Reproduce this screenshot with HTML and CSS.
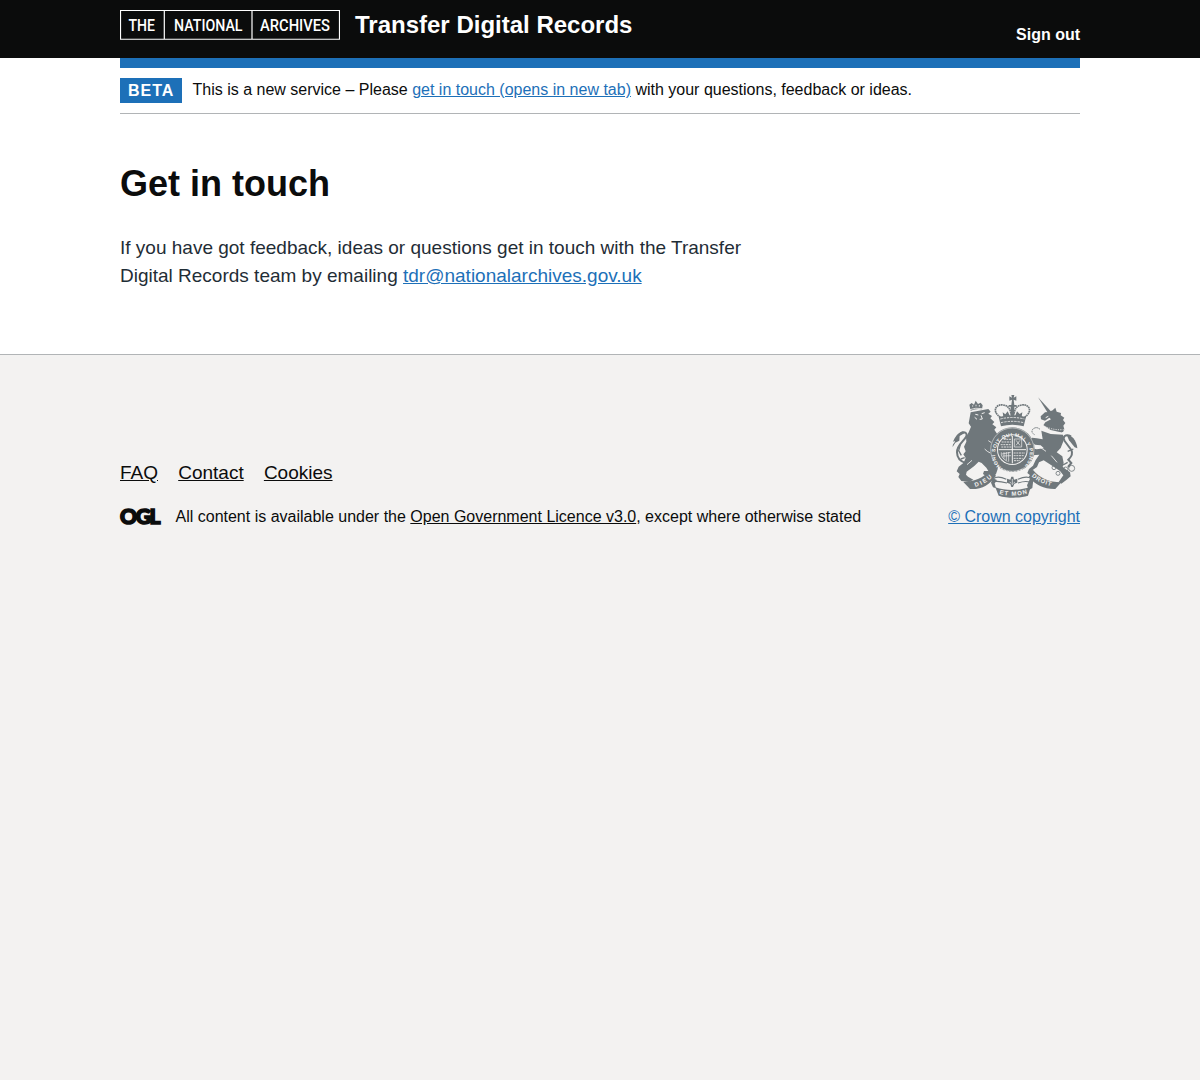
FILE: index.html
```html
<!DOCTYPE html>
<html lang="en">
<head>
<meta charset="utf-8">
<title>Get in touch</title>
<link rel="stylesheet" href="styles.css">
</head>
<body>
<header class="header">
  <div class="container header-row">
    <a class="brand" href="#">
      <svg class="brand-logo" width="220" height="30" viewBox="0 0 220 30" role="img" aria-label="The National Archives">
        <path d="M.5.5h219v28.75H.5zM44.3.5v28.8M132 .5v28.8" fill="none" stroke="#fff" stroke-width="1.2"/>
        <g class="brand-words">
          <text x="8.5" y="21" textLength="26.5" lengthAdjust="spacingAndGlyphs">THE</text>
          <text x="54" y="21" textLength="68.5" lengthAdjust="spacingAndGlyphs">NATIONAL</text>
          <text x="140" y="21" textLength="70" lengthAdjust="spacingAndGlyphs">ARCHIVES</text>
        </g>
      </svg>
      <span class="service-name">Transfer Digital Records</span>
    </a>
    <a class="sign-out" href="#">Sign out</a>
  </div>
</header>
<div class="container">
  <div class="blue-bar"></div>
  <div class="phase-banner">
    <strong class="tag">BETA</strong>
    <span>This is a new service – Please <a class="link" href="#">get in touch (opens in new tab)</a> with your questions, feedback or ideas.</span>
  </div>
  <main class="main">
    <h1 class="heading">Get in touch</h1>
    <p class="body-text">If you have got feedback, ideas or questions get in touch with the Transfer Digital Records team by emailing <a class="link" href="#">tdr@nationalarchives.gov.uk</a></p>
  </main>
</div>
<footer class="footer">
  <div class="container footer-row">
    <div class="footer-main">
      <nav class="footer-nav"><a href="#">FAQ</a><a href="#">Contact</a><a href="#">Cookies</a></nav>
      <div class="licence">
        <svg class="ogl" width="41" height="18" viewBox="0 0 41 18" role="img" aria-label="Open Government Licence">
          <text x="0" y="16.5" textLength="40.5">OGL</text>
        </svg>
        <span>All content is available under the <a href="#">Open Government Licence v3.0</a>, except where otherwise stated</span>
      </div>
    </div>
    <div class="copyright">
      <svg class="crest" width="130" height="104" viewBox="30 30 390 312" aria-hidden="true">
        <defs>
          <path id="motto-ring" d="M183 246A52 52 0 1 1 251 246"/>
          <path id="motto-left" d="M106 306Q136 298 163 271"/>
          <path id="motto-mid" d="M178 327Q220 338 264 325"/>
          <path id="motto-right" d="M275 274Q298 295 338 304"/>
        </defs>
        <!-- lion -->
        <g class="fill">
          <path d="M92 82l53-10 7 8-7 6 11 7-5 7 12 11-6 7 12 9-6 7 10 15-5 13 8 16-7 12 6 11-14 8 8 18 5 22-6 18-9 9-18-1-12-8 3-9 13 0-6-10-14-14-9-4-14 14-22 16-2 9 6 6 16 9-12 7-24-3-9-12 4-9-9-8 6-14 15-12 6-14-7-11 7-9-5-14 7-15-1-14 8-14 7-17-7-10z"/>
          <path d="M92 77l-4-18 7-5 7 5 5-12 7 10 8-4 6 8-2 12q-18-3-34 4z"/>
          <path d="M38 186c0-12 6-10 7-18l-6 2c7-14 12-24 28-31l12 2-20 12-1 14-12 6z"/>
        </g>
        <path class="line" stroke-width="6" d="M58 148c12-10 27-6 20 8C72 168 50 181 51 202c0 18 10 28 28 33"/>
        <path class="line" stroke-width="4" d="M62 176l-6 21 8 14m-2 11l12-4"/>
        <!-- unicorn -->
        <g class="fill">
          <path d="M294 37l40 43-9 6z"/>
          <path d="M326 81l12-5 8-8 4 12 13 4-1 7 11 7-4 7 7 9-6 8 3 11-5 10-36-8-22-14 6-9 17-9-5-5-13 9-12-4-1-9 13-12z"/>
          <path d="M304 137l28 10 37 2 1 20-8 20-12 13 17 12 4 20-3 12 22 16 2 12-13 11-15 11-8-5 14-20-10-13-27-18-22-14-14 6-6 14-13 9 8 13-10 7-14-11 5-12 12-10 8-17 11-16-20 2-11-11 9-10 14 3 22-3-10-9-17-2-14-13 5-8 14 2 18 3z"/>
          <path d="M412 190l-8-3-17-21-7-17c13 0 30 15 32 41z"/>
        </g>
        <path class="line" stroke-width="6" d="M393 154c-17-9-27 2-19 14l20 27c7 15-3 23-9 29l9 10-10 12"/>
        <path class="line" stroke-width="4" d="M383 199l17-7m-17 40l-14 8"/>
        <g class="line" stroke-width="2.500"><circle cx="342" cy="248" r="6"/><circle cx="354" cy="265" r="6"/><circle cx="377" cy="253" r="7"/><circle cx="395" cy="250" r="9"/><circle cx="348" cy="218" r="4"/></g>
        <path class="line" stroke-width="3" stroke-dasharray="5 2" d="M300 133q-11-10-22 0-6 10 6 16"/>
        <g class="paper-line">
          <path stroke-width="3" d="M106 88l9 2m10-4l9-3m-11 8l4 11-8 1m-15-6l7 6M317 98l8-4"/>
          <path stroke-width="2.500" d="M89 74q18-7 38-3M98 61v4m10-6v5m10-4v5M134 192q16 17 34 13M81 239l15-13M145 167q13 6 19 17M318 199l-20-14M334 212l17 20"/>
          <path stroke-width="3.500" stroke-dasharray="4 2.500" d="M303 127q26 18 67 16"/>
          <path stroke-width="3" stroke-dasharray="3 4" d="M308 120q24 16 63 14"/>
        </g>
        <!-- garter and quartered shield -->
        <circle class="fill" cx="217" cy="194" r="67"/>
        <circle class="paper-line" cx="217" cy="194" r="65" stroke-width="1.500"/>
        <circle class="paper" cx="217" cy="194" r="46"/>
        <circle class="fill" cx="217" cy="194" r="43"/>
        <text class="motto ring-text"><textPath href="#motto-ring" textLength="248">HONI SOIT QUI MAL Y PENSE</textPath></text>
        <g class="paper-line">
          <path stroke-width="3" d="M217 153v82M176 194h82"/>
          <path stroke-width="2.500" stroke-dasharray="6 2" d="M185 171h29m-32 8h31m-29 7h30m-23-23h24M221 204h34m-34 8h32m-32 8h27m-26 7h18"/>
          <path stroke-width="2" d="M223 162h22v24h-22zM228 181l12-15m-12 0l12 15M184 202q-3 16 18 27m-10-28v20m7-20v25m7-25v29m-20-23l26-5m-24 11l25-1"/>
          <path stroke-width="3" stroke-dasharray="5 5" d="M184 250q33 22 66 0"/>
        </g>
        <!-- crown -->
        <g class="fill">
          <path d="M176 96q41-10 82 0l-7 28q-34-9-68 0z"/>
          <path d="M214 30h9l-2 8 8-4v13l-8-3 2 16h-9l2-16-8 3V34l8 4zM206 60h24v5h-24zM212 65h11v30h-11zM188 82l8 6 7-9 7 15-20 2zM225 94l6-15 8 8 8-5-2 14z"/>
        </g>
        <path class="line" stroke-width="5" stroke-dasharray="5 1.500" d="M181 97C152 76 171 56 190 60q21 3 23 29M254 97C282 76 264 56 245 60q-21 3-23 29"/>
        <path class="paper-line" stroke-width="2.500" stroke-dasharray="7 3" d="M181 102q36-9 72 0M183 113q34-8 68 0"/>
        <!-- scrolls -->
        <g class="fill">
          <path d="M70 291c36-2 59-12 80-36l18 17c-19 28-43 42-78 40z"/>
          <path d="M166 307c34 11 68 10 106-1l-8 26c-25 8-61 8-88 0z"/>
          <path d="M279 255c20 24 46 36 85 37l-18 20c-32 1-59-12-80-36z"/>
          <path d="M158 280l13 5-7 10 4 15-9-3-6-14zM270 281l10 4-3 24-11 7-5-15z"/>
          <path d="M214 275h6l2 9 10-3v12l-9 3-4 10h-5l-3-9-10-4v-12l10 3z"/>
        </g>
        <path class="line" stroke-width="3.500" d="M161 281q12-10 38 2m-37 7q13-3 39 4M273 281q-12-10-39 2m35 8q-14-4-35 3"/>
        <path class="paper-line" stroke-width="2" d="M217 282v18m-8-9l5 4m11-4l-5 4"/>
        <text class="motto"><textPath href="#motto-left" textLength="58">DIEU</textPath></text>
        <text class="motto"><textPath href="#motto-mid" textLength="85">ET MON</textPath></text>
        <text class="motto"><textPath href="#motto-right" textLength="65">DROIT</textPath></text>
      </svg>
      <a class="link" href="#">© Crown copyright</a>
    </div>
  </div>
</footer>
</body>
</html>
```
FILE: styles.css
```css
* { box-sizing: border-box; }
html { background: #f3f2f1; }
body { margin: 0; background: #fff; color: #0b0c0c; font-family: "Liberation Sans", Arial, sans-serif; font-size: 16px; line-height: 20px; }
.container { width: 960px; margin: 0 auto; }
.header { height: 58px; background: #0b0c0c; }
.header-row { display: flex; justify-content: space-between; padding-top: 10px; }
.brand { display: flex; gap: 15px; color: #fff; text-decoration: none; }
.brand-logo, .ogl, .crest { display: block; flex: none; }
.brand-words { fill: #fff; font: 500 16px Roboto, sans-serif; }
.service-name { font-size: 24px; font-weight: 700; line-height: 30px; }
.sign-out { padding-top: 15px; color: #fff; font-weight: 700; text-decoration: none; }
.blue-bar { height: 10px; background: #1d70b8; }
.phase-banner { display: flex; align-items: flex-start; gap: 10.5px; height: 46px; padding-top: 10px; border-bottom: 1px solid #b1b4b6; line-height: 23px; }
.tag { width: 62px; height: 25px; padding-left: 8px; background: #1d70b8; color: #fff; letter-spacing: 1px; line-height: 25px; }
.link { color: #1d70b8; text-underline-offset: 1px; }
.main { height: 240px; padding-top: 50px; }
.heading { margin: 0 0 30px; font-size: 36px; line-height: 40px; }
.body-text { width: 640px; margin: 0; font-size: 19px; line-height: 28px; color: #1f2d36; }
.footer { border-top: 1px solid #b1b4b6; background: #f3f2f1; }
.footer a:not(.link) { color: #0b0c0c; }
.footer-row { display: flex; justify-content: space-between; align-items: flex-end; padding-top: 40px; }
.footer-nav { display: flex; gap: 20.2px; margin-bottom: 22px; font-size: 19px; line-height: 24px; }
.footer-nav a, .licence a { text-underline-offset: 1px; }
.licence { display: flex; gap: 14.5px; }
.ogl { overflow: visible; fill: #0b0c0c; stroke: #0b0c0c; stroke-width: 1.6; font: 900 21px Lato, sans-serif; }
.copyright { text-align: right; }
.crest { margin: 0 0 8px 2px; }
.fill { fill: #6f777b; }
.line { fill: none; stroke: #6f777b; }
.paper { fill: #f3f2f1; }
.paper-line { fill: none; stroke: #f3f2f1; }
.motto { fill: #f3f2f1; font: 700 18px "Liberation Sans", sans-serif; }
.ring-text { font-size: 15px; }
```
